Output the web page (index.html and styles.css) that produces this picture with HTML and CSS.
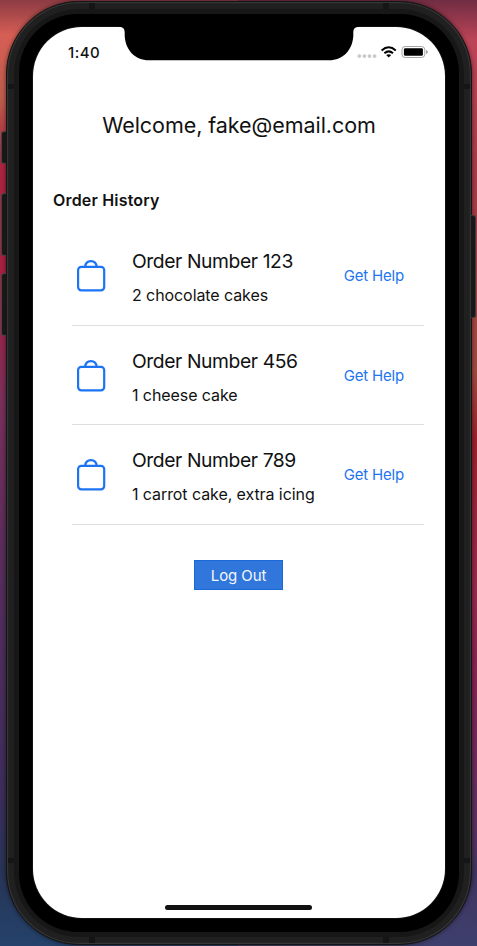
FILE: index.html
```html
<!DOCTYPE html>
<html lang="en">
<head>
<meta charset="utf-8">
<title>Order History</title>
<link rel="stylesheet" href="styles.css">
</head>
<body>
<svg class="symbols" width="0" height="0" aria-hidden="true">
  <symbol id="bag" viewBox="0 0 30 34">
    <rect x="2.100" y="7.800" width="26.100" height="23.500" rx="3.200"/>
    <path d="M9.100 7.800C9.400 4.300 11.800 2.100 14.900 2.100S20.400 4.300 20.700 7.800"/>
  </symbol>
</svg>
<div class="phone">
  <i class="key mute"></i><i class="key up"></i><i class="key down"></i><i class="key power"></i>
  <i class="band top-left"></i><i class="band top-right"></i><i class="band bottom-left"></i><i class="band bottom-right"></i>
  <i class="band side left-upper"></i><i class="band side left-lower"></i><i class="band side right-upper"></i><i class="band side right-lower"></i>
  <div class="rim">
    <div class="bezel">
      <div class="screen">
        <svg class="notch" width="240" height="35" viewBox="0 0 240 35" aria-hidden="true">
          <path d="M0 0H240V1C236 1 234.300 2.500 234.300 6.500V10C233.500 24 224 34.300 210 34.300H30C16 34.300 6.500 24 5.700 10V6.500C5.700 2.500 4 1 0 1Z"/>
        </svg>
        <header class="status">
          <span class="time">1:40</span>
          <svg class="indicators" width="72" height="14" viewBox="0 0 72 14" aria-hidden="true">
            <g fill="#c9c9cb"><circle cx="3.300" cy="11.100" r="1.900"/><circle cx="8.400" cy="11.100" r="1.900"/><circle cx="13.500" cy="11.100" r="1.900"/><circle cx="18.600" cy="11.100" r="1.900"/></g>
            <g transform="translate(.6 .6)">
              <g fill="none" stroke="#000" stroke-width="2"><path d="M25 4.800Q32.100-1.500 39.200 4.800"/><path d="M27.800 7.700Q32.100 3.800 36.400 7.700"/></g>
              <path d="M29.600 9.500Q32.100 7.600 34.600 9.500L32.100 12Z"/>
            </g>
            <rect x="46" y="1.500" width="22.800" height="11" rx="3.200" fill="none" stroke="#a5a5a7"/>
            <rect x="47.900" y="3.200" width="19" height="7.600" rx="1.400"/>
            <path d="M70.200 5V8.900Q71.700 8.400 71.700 6.950T70.200 5Z" fill="#8d8d90"/>
          </svg>
        </header>
        <main>
          <h1>Welcome, fake@email.com</h1>
          <h2>Order History</h2>
          <ul class="orders">
            <li><svg class="bag"><use href="#bag"/></svg><div class="details"><h3>Order Number 123</h3><p>2 chocolate cakes</p></div><a>Get Help</a></li>
            <li><svg class="bag"><use href="#bag"/></svg><div class="details"><h3>Order Number 456</h3><p>1 cheese cake</p></div><a>Get Help</a></li>
            <li><svg class="bag"><use href="#bag"/></svg><div class="details"><h3>Order Number 789</h3><p>1 carrot cake, extra icing</p></div><a>Get Help</a></li>
          </ul>
          <button>Log Out</button>
        </main>
        <i class="home"></i>
      </div>
    </div>
  </div>
</div>
</body>
</html>
```
FILE: styles.css
```css
* { box-sizing: border-box; margin: 0; padding: 0; }

body {
  height: 946px;
  overflow: hidden;
  font-family: Inter, "Liberation Sans", sans-serif;
  color: #111;
  background:
    linear-gradient(#8d3b44 0, #d65e54 35px, #bb5c4b 100px, #aa2540 155px, #a71f42 290px, #78305a 400px, #562d5b 570px, #3d2d5a 790px, #283455 870px, #24426b 946px) 0 0 / 238px 946px no-repeat,
    linear-gradient(#702d43 0, #bd4457 40px, #a83a49 180px, #9e4b3e 370px, #9c202d 440px, #99284c 580px, #802455 700px, #57315f 830px, #40355f 870px, #3e3f6d 946px) 238px 0 / 239px 946px no-repeat;
}

.symbols { position: absolute; }

.phone {
  position: relative;
  width: 466px;
  height: 944px;
  margin: 1px 0 0 6px;
  padding: 7px;
  border: 1px solid #151515;
  border-radius: 73px;
  background: #202020;
  box-shadow: inset 0 0 0 1.2px #353535, 0 0 4px #0008;
}
.rim { height: 928px; padding: 5px; border-radius: 65px; background: #171717; }
.bezel { height: 918px; padding: 13px; border-radius: 59px; background: #000; }
.screen {
  position: relative;
  height: 891px;
  margin: 0 1px;
  border-radius: 49px;
  background: #fff;
  box-shadow: 0 0 0 1px #111;
}

.key { position: absolute; left: -6px; width: 5px; border: 1px solid #444; border-right: 0; border-radius: 3px 0 0 3px; background: #181818; }
.mute { top: 129px; height: 33px; }
.up { top: 191px; height: 63px; }
.down { top: 271px; height: 63px; }
.power { top: 213px; left: 464px; height: 103px; border: 1px solid #393939; border-left: 0; border-radius: 0 3px 3px 0; }

.band { position: absolute; width: 6px; height: 6px; background: #151515; }
.top-left { top: 1px; left: 82px; }
.top-right { top: 1px; left: 376px; }
.bottom-left { bottom: 1px; left: 82px; }
.bottom-right { bottom: 1px; left: 376px; }
.side { width: 6px; height: 5px; }
.left-upper { top: 82px; left: 1px; }
.left-lower { top: 856px; left: 1px; }
.right-upper { top: 82px; right: 1px; }
.right-lower { top: 856px; right: 1px; }

.notch { position: absolute; top: -1px; left: 86px; }

.status { display: flex; justify-content: space-between; height: 52px; padding: 17px 17px 0 35px; }
.time { font-size: 15px; line-height: 18px; font-weight: 500; letter-spacing: .45px; }
.indicators { margin-top: 1px; }

main { display: flex; flex-direction: column; }
h1 { margin-top: 32px; align-self: center; font-size: 21.5px; line-height: 28px; font-weight: 400; white-space: nowrap; letter-spacing: -.06px; }
h2 { margin: 50px 0 0 20px; font-size: 16px; line-height: 22px; font-weight: 600; letter-spacing: .18px; }
.orders { margin: 15px 21px 0 39px; list-style: none; }
.orders li { display: flex; align-items: flex-start; height: 99.5px; padding: 22px 20px 0 4px; border-bottom: 1px solid #dedede; }
.bag { flex: none; width: 30px; height: 34px; margin-top: 11px; fill: none; stroke: #1c74f3; stroke-width: 2.2; }
.details { flex: 1; margin-left: 26px; white-space: nowrap; }
h3 { font-size: 19.3px; line-height: 26px; font-weight: 400; letter-spacing: -.41px; }
p { margin-top: 10px; font-size: 16px; line-height: 22px; letter-spacing: -.08px; }
.orders a { margin-top: 18px; font-size: 15px; line-height: 20px; letter-spacing: -.2px; color: #1e75ee; white-space: nowrap; }
button { align-self: center; width: 89px; height: 30px; margin: 35px 1px 0 0; padding-top: 1px; border: 1px solid #1968d8; background: #3176da; color: #f3f8ff; font: 15px/27px Inter, sans-serif; letter-spacing: -.1px; }

.home { position: absolute; left: 132px; bottom: 8px; width: 147px; height: 5px; border-radius: 3px; background: #111; }
```
